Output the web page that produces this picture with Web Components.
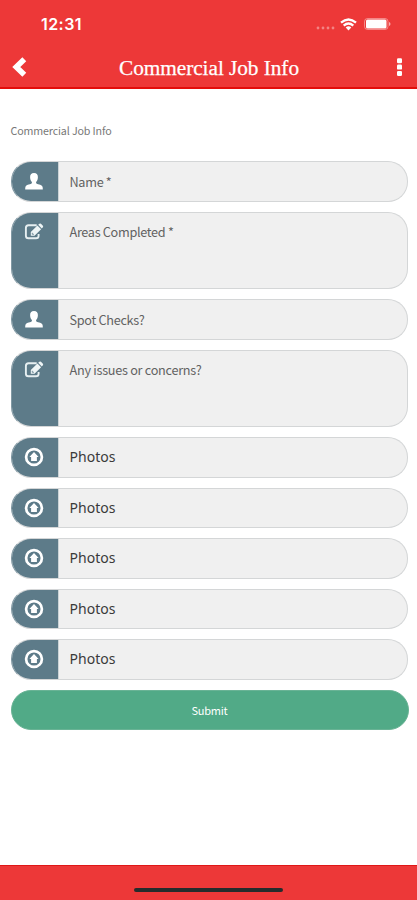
<!DOCTYPE html>
<html lang="en"><head><meta charset="utf-8"><title>Commercial Job Info</title>
<style>html,body{margin:0;height:100%;background:#fff}</style></head>
<body><job-page></job-page>
<script>
const define = (name, html, setup) => {
  const t = document.createElement('template');
  t.innerHTML = html;
  customElements.define(name, class extends HTMLElement {
    constructor() {
      super();
      this.attachShadow({mode: 'open'}).append(t.content.cloneNode(true));
    }
    connectedCallback() { if (setup) setup(this, this.shadowRoot); }
  });
};

/* One line of text, tracked so that it spans the width attribute. */
define('fit-text', `<style>:host{display:block;white-space:pre}span{display:inline-block}</style><span></span>`, (el, root) => {
  const s = root.querySelector('span');
  s.textContent = el.getAttribute('text');
  const w = +el.getAttribute('width');
  s.style.letterSpacing = (w - s.getBoundingClientRect().width) / s.textContent.length + 'px';
});

define('status-bar', `<style>
:host{display:flex;height:48px;box-sizing:border-box;padding:0 26px 0 41px;align-items:center;color:#fff}
fit-text{font:600 16px/20px Inter,"Liberation Sans",sans-serif;flex:1}
svg{display:block}
.dots{margin:8px 5px 0 0}.wifi{margin-right:7px}
</style>
<fit-text text="12:31" width="41"></fit-text>
<svg class="dots" width="19" height="4" fill="#fff" opacity=".38"><circle cx="2" cy="2" r="1.4"/><circle cx="7" cy="2" r="1.4"/><circle cx="12" cy="2" r="1.4"/><circle cx="17" cy="2" r="1.4"/></svg>
<svg class="wifi" width="17" height="13" viewBox="0 0 17 13"><g fill="none" stroke="#fff" stroke-width="2.4"><path d="M1 4.7Q8.500-1.700 16 4.700"/><path d="M3.700 7.600Q8.500 3.600 13.300 7.600"/></g><path d="M5.700 9.500Q8.500 7.200 11.300 9.500L8.500 12.500Z" fill="#fff"/></svg>
<svg width="27" height="12" viewBox="0 0 27 12"><rect x=".5" y=".5" width="23.500" height="11" rx="3" fill="none" stroke="#fff" stroke-opacity=".4"/><rect x="2" y="1.500" width="20.500" height="9" rx="1.500" fill="#fff"/><path d="M25 4Q26.500 4.500 26.500 6T25 8Z" fill="#fff" opacity=".6"/></svg>`);

define('nav-bar', `<style>
:host{display:grid;grid-template-columns:119px 1fr 119px;height:39px;align-items:center;color:#fff}
fit-text{font:21.3px/26px "Liberation Serif",serif;-webkit-text-stroke:.25px #fff}
.back{margin-left:12px}.more{justify-self:end;margin-right:14px}
svg{display:block;margin-bottom:1px}
</style>
<svg class="back" width="15" height="20" viewBox="0 0 15 20"><path d="M12.300 2.300 4.300 10l8 7.700" fill="none" stroke="#fff" stroke-width="5.600"/></svg>
<fit-text text="Commercial Job Info" width="180"></fit-text>
<svg class="more" width="9" height="20" viewBox="0 0 9 20" fill="#fff"><rect x="2" y="1.300" width="5" height="5" rx="1.200"/><rect x="2" y="7.600" width="5" height="5" rx="1.200"/><rect x="2" y="13.900" width="5" height="5" rx="1.200"/></svg>`);

const icons = {
  user: `<svg width="18" height="18" viewBox="0 0 18 18"><path d="M9 1C6.200 1 5 2.700 5.100 5.200C5.200 7.600 6 9.100 6.900 9.900V11.300C6.100 12.300 1.600 12.500.6 14.500Q.1 15.600.2 17.500H17.800Q17.900 15.600 17.400 14.500C16.400 12.500 11.900 12.300 11.100 11.300V9.900C12 9.100 12.800 7.600 12.900 5.200C13 2.700 11.800 1 9 1Z" fill="#fff"/></svg>`,
  edit: `<svg width="20" height="18" viewBox="0 0 20 18"><path d="M12.700 2.300H4.500Q1.900 2.300 1.900 4.900V12.700Q1.900 15.300 4.500 15.300H12Q14.600 15.300 14.600 12.700V11" fill="none" stroke="#e6eff1" stroke-width="1.900"/><path d="M6.800 12.700V9.100L13.400 2.500 17.100 6.200 10.500 12.700ZM14.200 1.800 15.400.7Q16.200.1 17 .8L18.900 2.700Q19.500 3.500 18.900 4.200L17.800 5.400Z" fill="#eef5f6"/><path d="M8.300 9.800v1.500h1.600" fill="none" stroke="#5d7b89" stroke-width=".8"/></svg>`,
  upload: `<svg width="20" height="20" viewBox="0 0 20 20"><circle cx="10" cy="10" r="7.900" fill="none" stroke="#fff" stroke-width="2.700"/><path d="M10 4.900 14.600 9.900H12.900V14H7.100V9.900H5.400Z" fill="#fff"/></svg>`
};

define('form-field', `<style>
:host{display:flex;box-sizing:border-box;height:40.5px;border:1px solid #d4d6d7;border-left-color:#8199a4;border-radius:20px;overflow:hidden;background:#f0f0f0;color:#626262}
:host([tall]){height:77.5px}
i{display:flex;justify-content:center;align-items:center;box-sizing:border-box;width:47.5px;background:#5d7b89;border-right:1px solid #cbd3d6}
fit-text{margin-left:10.500px;align-self:center;font:12.700px/20px "Noto Sans CJK SC","Noto Sans",sans-serif}
:host([tall]) i{align-items:flex-start;padding-top:10px}
:host([tall]) fit-text{align-self:flex-start;margin-top:9.500px}
:host([icon=user]) fit-text{margin-top:1px}
:host([icon=upload]) fit-text{font:14px/20px "Noto Sans",sans-serif;color:#3a3a3a}
svg{display:block;margin-right:1px}
:host([icon=user]) svg{margin-bottom:1px}
</style><i></i>`, (el, root) => {
  root.querySelector('i').innerHTML = icons[el.getAttribute('icon')];
  const t = document.createElement('fit-text');
  t.setAttribute('text', el.getAttribute('label'));
  t.setAttribute('width', el.getAttribute('span'));
  root.append(t);
});

define('submit-button', `<style>
:host{display:flex;justify-content:center;align-items:center;box-sizing:border-box;height:40.5px;margin-right:-1px;border:1px solid #69b395;border-radius:20px;background:#51aa87;color:#fff}
fit-text{font:11px/20px "Noto Sans CJK SC","Noto Sans",sans-serif}
</style><fit-text text="Submit" width="36"></fit-text>`);

define('job-page', `<style>
:host{display:flex;flex-direction:column;width:417px;height:900px;overflow:hidden;background:#fff}
header,footer{background:#ed3838}
header{height:89px;box-sizing:border-box;border-bottom:2px solid #e30d0b}
main{flex:1;padding:33px 9.500px 0 10.500px}
.title{font:10.700px/18px "Noto Sans CJK SC","Noto Sans",sans-serif;color:#777}
form{display:flex;flex-direction:column;gap:10px;margin-top:21px}
footer{height:35px;box-sizing:border-box;border-top:1.500px solid #df1717;display:flex;justify-content:center;padding-top:22px}
footer b{width:149px;height:4px;border-radius:2px;background:#252c2c}
</style>
<header><status-bar></status-bar><nav-bar></nav-bar></header>
<main><fit-text class="title" text="Commercial Job Info" width="101"></fit-text>
<form>
<form-field icon="user" label="Name *" span="42"></form-field>
<form-field tall icon="edit" label="Areas Completed *" span="104"></form-field>
<form-field icon="user" label="Spot Checks?" span="75"></form-field>
<form-field tall icon="edit" label="Any issues or concerns?" span="132"></form-field>
<form-field icon="upload" label="Photos" span="46"></form-field>
<form-field icon="upload" label="Photos" span="46"></form-field>
<form-field icon="upload" label="Photos" span="46"></form-field>
<form-field icon="upload" label="Photos" span="46"></form-field>
<form-field icon="upload" label="Photos" span="46"></form-field>
<submit-button></submit-button>
</form></main>
<footer><b></b></footer>`);
</script></body></html>
